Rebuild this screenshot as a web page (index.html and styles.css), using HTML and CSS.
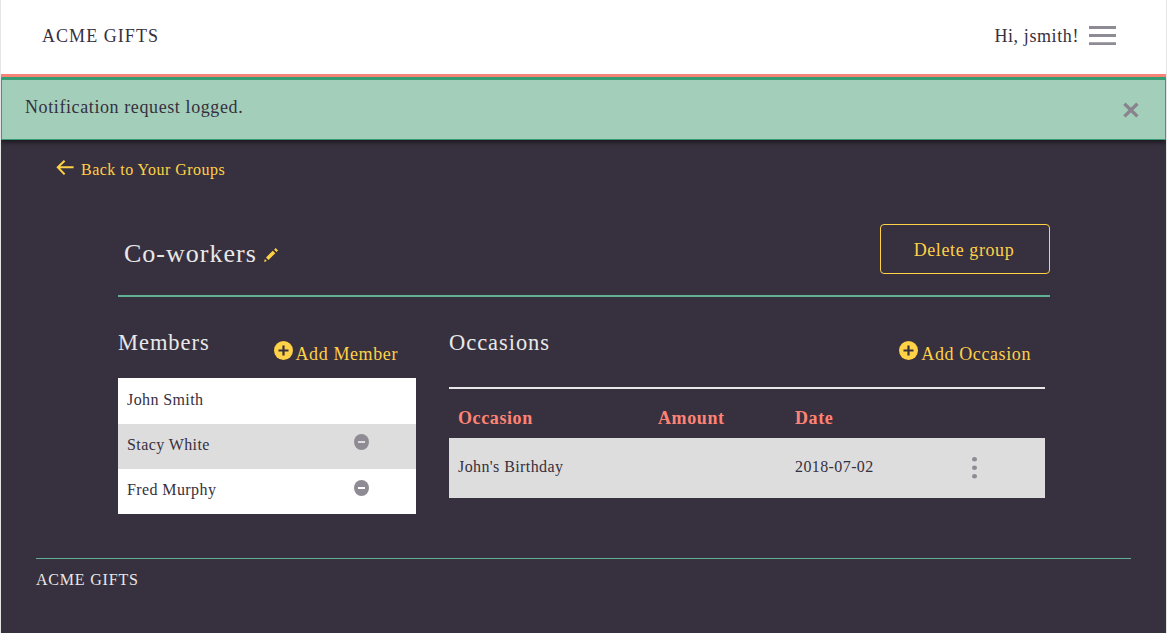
FILE: index.html
```html
<!DOCTYPE html>
<html lang="en">
<head>
<meta charset="utf-8">
<title>Acme Gifts</title>
<link rel="stylesheet" href="styles.css">
</head>
<body>
<div class="page">
  <header class="header">
    <span class="brand">ACME GIFTS</span>
    <div class="user">
      <span>Hi, jsmith!</span>
      <svg class="menu-icon" width="27" height="20" viewBox="0 0 27 20"><path d="M0 1.5h27M0 9.5h27M0 17.7h27" stroke="#8f8b94" stroke-width="2.8"/></svg>
    </div>
  </header>
  <div class="notice">
    <span>Notification request logged.</span>
    <svg class="close-icon" width="16" height="16" viewBox="0 0 16 16"><path d="M1.4 1.8l13 12.6M14.4 1.8L1.4 14.4" stroke="#88838c" stroke-width="3.3"/></svg>
  </div>
  <main class="main">
    <a class="back">
      <svg width="18" height="16" viewBox="0 0 18 16"><path d="M17.6 7.2H1.8M8.6 .7L1.8 7.2l6.8 7.2" fill="none" stroke="#ffd147" stroke-width="2"/></svg>
      <span>Back to Your Groups</span>
    </a>
    <div class="group">
      <div class="group-head">
        <h1 class="group-name">Co-workers</h1>
        <svg class="edit-icon" width="14" height="14" viewBox="0 0 14 14"><path d="M2 9.4L8.8 2.7l2.5 2.5-6.8 6.7zM0 14l.9-3 2 2zM10.1 1.7L11.7.1l2.3 2.3-1.5 1.5z" fill="#ffd147"/></svg>
        <button class="delete">Delete group</button>
      </div>
      <div class="columns">
        <section class="members">
          <div class="section-head">
            <h2>Members</h2>
            <a class="add"><svg width="19" height="19" viewBox="0 0 19 19"><circle cx="9.5" cy="9.5" r="9.5" fill="#ffd147"/><path d="M9.5 4.5v10M4.5 9.5h10" stroke="#37303f" stroke-width="2.2"/></svg><span>Add Member</span></a>
          </div>
          <ul class="member-list">
            <li><span>John Smith</span></li>
            <li><span>Stacy White</span><svg width="15" height="16" viewBox="0 0 15 16"><ellipse cx="7.5" cy="8" rx="7.5" ry="8" fill="#8f8b94"/><path d="M4 8h7" stroke="#ddd" stroke-width="2"/></svg></li>
            <li><span>Fred Murphy</span><svg width="15" height="16" viewBox="0 0 15 16"><ellipse cx="7.5" cy="8" rx="7.5" ry="8" fill="#8f8b94"/><path d="M4 8h7" stroke="#fff" stroke-width="2"/></svg></li>
          </ul>
        </section>
        <section class="occasions">
          <div class="section-head">
            <h2>Occasions</h2>
            <a class="add"><svg width="19" height="19" viewBox="0 0 19 19"><circle cx="9.5" cy="9.5" r="9.5" fill="#ffd147"/><path d="M9.5 4.5v10M4.5 9.5h10" stroke="#37303f" stroke-width="2.2"/></svg><span>Add Occasion</span></a>
          </div>
          <div class="row row-head"><span>Occasion</span><span>Amount</span><span>Date</span></div>
          <div class="row row-item"><span>John's Birthday</span><span></span><span>2018-07-02</span><svg width="5" height="22" viewBox="0 0 5 22"><g fill="#8f8b94"><ellipse cx="2.5" cy="2.3" rx="2.5" ry="2.2"/><ellipse cx="2.5" cy="10.8" rx="2.5" ry="2.2"/><ellipse cx="2.5" cy="19.3" rx="2.5" ry="2.2"/></g></svg></div>
        </section>
      </div>
    </div>
  </main>
  <footer class="footer">ACME GIFTS</footer>
</div>
</body>
</html>
```

FILE: styles.css
```css
* { box-sizing: border-box; }
body {
  margin: 0;
  background: #37303e;
  color: #37303e;
  font: 18px/20px "Liberation Serif", "Times New Roman", serif;
  letter-spacing: 0.6px;
}
svg { display: block; flex: none; }
h1, h2 { margin: 0; font-weight: 400; color: #e8e8e8; }
.page {
  height: 633px;
  overflow: hidden;
  border: solid #e5e5e5;
  border-width: 0 1px;
}
.header {
  display: flex;
  justify-content: space-between;
  height: 77px;
  padding: 26px 50px 0 41px;
  background: #fff;
  border-bottom: 3px solid #f58376;
}
.brand { letter-spacing: 1.05px; }
.user { display: flex; gap: 10px; }
.menu-icon { height: 20px; }
.notice {
  position: relative;
  display: flex;
  justify-content: space-between;
  height: 63px;
  padding: 17px 26px 0 23px;
  background: #a2ceba;
  border: 1px solid #359c73;
  border-top-width: 3px;
  box-shadow: 0 2px 5px rgba(0, 0, 0, 0.6);
  clip-path: inset(0 0 -10px 0);
}
.close-icon { margin-top: 5px; }
.main { padding-top: 20px; color: #ffd147; }
.back {
  display: flex;
  gap: 7px;
  margin-left: 55px;
  font-size: 16px;
  letter-spacing: 0.48px;
}
.group { width: 932px; margin: 44px 0 0 117px; }
.group-head {
  display: flex;
  height: 73px;
  padding-left: 6px;
  border-bottom: 2px solid #62b094;
}
.group-name { margin-top: 15px; font-size: 26px; line-height: 30px; letter-spacing: 1px; }
.edit-icon { margin: 24px 0 0 7px; }
.delete {
  width: 170px;
  height: 50px;
  margin-left: auto;
  padding: 2px 2px 0 0;
  color: #ffd147;
  background: none;
  border: 1px solid #ffd147;
  border-radius: 4px;
  font: inherit;
  letter-spacing: 0.6px;
}
.columns { display: flex; gap: 33px; padding-top: 31px; }
.members { width: 298px; }
.occasions { width: 596px; }
.section-head { display: flex; justify-content: space-between; height: 50px; }
.section-head h2 { font-size: 22.5px; line-height: 30px; letter-spacing: 0.95px; }
.add { display: flex; gap: 3px; padding: 13px 18px 0 0; }
.add span { margin-top: 3px; }
.occasions .section-head { height: 61px; border-bottom: 2px solid #e8e8e8; }
.occasions .add { padding-right: 14px; }
.member-list {
  margin: 0;
  padding: 0;
  list-style: none;
  color: #37303e;
  font-size: 16px;
  letter-spacing: 0.4px;
}
.member-list li {
  display: flex;
  justify-content: space-between;
  height: 45px;
  padding: 11px 47px 0 9px;
  background: #fff;
}
.member-list li:first-child { height: 46px; padding-top: 12px; }
.member-list li:nth-child(2) { background: #ddd; }
.member-list li:nth-child(2) svg { margin-top: -1px; }
.row {
  display: grid;
  grid-template-columns: 200px 137px 177px 5px;
  padding-left: 9px;
}
.row-head { height: 49px; padding-top: 19px; color: #ff8375; font-weight: 700; }
.row-item {
  height: 60px;
  padding-top: 19px;
  color: #37303e;
  background: #ddd;
  font-size: 16px;
  letter-spacing: 0.4px;
}
.footer {
  width: 1095px;
  margin: 44px 0 0 35px;
  padding-top: 11px;
  color: #e8e8e8;
  border-top: 1px solid #62b094;
  font-size: 16px;
  letter-spacing: 0.8px;
}
```
